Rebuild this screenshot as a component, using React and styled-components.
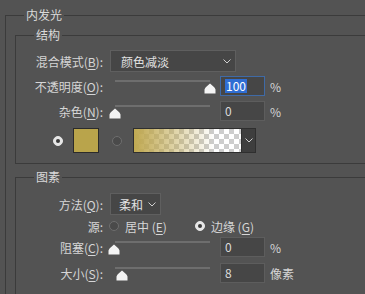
import React from 'react';
import styled, { createGlobalStyle } from 'styled-components';

const Global = createGlobalStyle`
  html, body { margin: 0; padding: 0; background: #535353; }
  body {
    width: 365px; height: 294px; overflow: hidden;
    font-family: "Noto Sans CJK SC", "Noto Sans", sans-serif;
    font-size: 12px; color: #d6d6d6;
  }
  u { text-underline-offset: 2px; }
`;

const Page = styled.div`
  width: 365px; height: 294px; overflow: hidden;
  box-sizing: border-box; padding: 7px 0 0 5px;
`;

const Group = styled.fieldset`
  margin: ${p => p.$mt || 0}px 0 0 ${p => p.$ml || 0}px;
  padding: 0 0 ${p => p.$pb || 0}px 0;
  border: 1px solid #3b3b3b;
  width: 430px; box-sizing: border-box; min-width: 0;
`;

const Title = styled.legend`
  margin-left: 18px; padding: 0 2px;
  line-height: 16px; font-size: 12px; color: #dadada;
`;

const Row = styled.div`
  display: flex; align-items: center;
  height: ${p => p.$h}px;
  margin-top: ${p => p.$mt || 0}px;
  padding-left: ${p => p.$pl || 0}px;
`;

const Label = styled.span`
  width: 87px; flex-shrink: 0; text-align: right; white-space: nowrap;
  margin-right: 7px;
`;

const Select = styled.div`
  width: ${p => p.$w}px; height: 22px; box-sizing: border-box;
  display: flex; align-items: center; justify-content: space-between;
  padding: 0 4px 0 ${p => p.$pl}px;
  background: #464646; border: 1px solid #5f5f5f; color: #e2e2e2;
`;

const Chevron = () => (
  <svg width="8" height="5" viewBox="0 0 8 5">
    <polyline points="0.5,0.5 4,4 7.5,0.5" fill="none" stroke="#cfcfcf" strokeWidth="1" />
  </svg>
);

const SliderBox = styled.div`
  position: relative; width: 95px; height: 100%;
  padding: 0 5px; flex-shrink: 0;
`;

const Track = styled.div`
  margin-top: 4px; height: 2px; background: #6e6e6e;
`;

const ThumbWrap = styled.div`
  position: absolute; top: 7px; width: 12px; height: 11px; margin-left: -6px;
  display: flex;
`;

const Thumb = () => (
  <svg width="12" height="11" viewBox="0 0 12 11">
    <path d="M6 0.5 C7.5 2, 11 4, 11.5 6.5 V10.5 H0.5 V6.5 C1 4, 4.5 2, 6 0.5 Z" fill="#f4f4f4" />
  </svg>
);

const Slider = ({ pos }) => (
  <SliderBox>
    <Track />
    <ThumbWrap style={{ left: 5 + pos }}><Thumb /></ThumbWrap>
  </SliderBox>
);

const Field = styled.div`
  width: 45px; height: 20px; box-sizing: border-box; flex-shrink: 0;
  margin-left: 5px; padding-left: 4px;
  display: flex; align-items: center;
  background: #464646; border: 1px solid ${p => (p.$focus ? '#3f6aa6' : '#5d5d5d')};
  color: #dcdcdc; line-height: 14px;
`;

const Selected = styled.span`
  background: #2f6ed4; color: #ffffff; padding: 0 1px;
`;

const Unit = styled.span`
  margin-left: 5px; color: #d6d6d6;
`;

const Radio = styled.span`
  width: 10px; height: 10px; border-radius: 50%; box-sizing: border-box; flex-shrink: 0;
  margin-left: ${p => p.$ml || 0}px;
  display: flex; align-items: center; justify-content: center;
  background: ${p => (p.$on ? '#e6e6e6' : '#4a4a4a')};
  border: 1px solid ${p => (p.$on ? '#e6e6e6' : '#6e6e6e')};
  &::after {
    content: ''; width: 4px; height: 4px; border-radius: 50%;
    background: ${p => (p.$on ? '#3a3a3a' : 'transparent')};
  }
`;

const RadioText = styled.span`
  margin-left: 6px; white-space: nowrap;
`;

const Swatch = styled.div`
  width: 26px; height: 25px; box-sizing: border-box; margin-left: 10px;
  background: #b9a44b; border: 1px solid #2b2b2b;
`;

const Gradient = styled.div`
  width: 108px; height: 25px; box-sizing: border-box; margin-left: 11px;
  border: 1px solid #2f2f2f; border-right: none;
  background:
    linear-gradient(to right, #c0a952 0%, rgba(192,169,82,0.55) 35%, rgba(192,169,82,0) 75%),
    repeating-conic-gradient(#cdcdcd 0% 25%, #ffffff 0% 50%) 0 0 / 10px 10px;
`;

const GradientMenu = styled.div`
  width: 15px; height: 25px; box-sizing: border-box;
  display: flex; align-items: center; justify-content: center;
  background: #3e3e3e; border: 1px solid #2f2f2f;
`;

export default function App() {
  return (
    <Page>
      <Global />
      <Group>
        <Title>内发光</Title>
        <Group $mt={4} $ml={9} $pb={10}>
          <Title>结构</Title>
          <Row $h={22} $mt={7}>
            <Label>混合模式(<u>B</u>):</Label>
            <Select $w={126} $pl={10}>颜色减淡<Chevron /></Select>
          </Row>
          <Row $h={20} $mt={4}>
            <Label>不透明度(<u>O</u>):</Label>
            <Slider pos={95} />
            <Field $focus><Selected>100</Selected></Field>
            <Unit>%</Unit>
          </Row>
          <Row $h={20} $mt={5}>
            <Label>杂色(<u>N</u>):</Label>
            <Slider pos={0} />
            <Field>0</Field>
            <Unit>%</Unit>
          </Row>
          <Row $h={25} $mt={7} $pl={37}>
            <Radio $on />
            <Swatch />
            <Radio $ml={13} />
            <Gradient />
            <GradientMenu><Chevron /></GradientMenu>
          </Row>
        </Group>
        <Group $mt={5} $ml={9} $pb={20}>
          <Title>图素</Title>
          <Row $h={22} $mt={8}>
            <Label>方法(<u>Q</u>):</Label>
            <Select $w={51} $pl={8}>柔和<Chevron /></Select>
          </Row>
          <Row $h={22}>
            <Label>源:</Label>
            <Radio $ml={-1} />
            <RadioText>居中 (<u>E</u>)</RadioText>
            <Radio $ml={28} $on />
            <RadioText>边缘 (<u>G</u>)</RadioText>
          </Row>
          <Row $h={20}>
            <Label>阻塞(<u>C</u>):</Label>
            <Slider pos={-1} />
            <Field>0</Field>
            <Unit>%</Unit>
          </Row>
          <Row $h={20} $mt={6}>
            <Label>大小(<u>S</u>):</Label>
            <Slider pos={7} />
            <Field>8</Field>
            <Unit>像素</Unit>
          </Row>
        </Group>
      </Group>
    </Page>
  );
}
